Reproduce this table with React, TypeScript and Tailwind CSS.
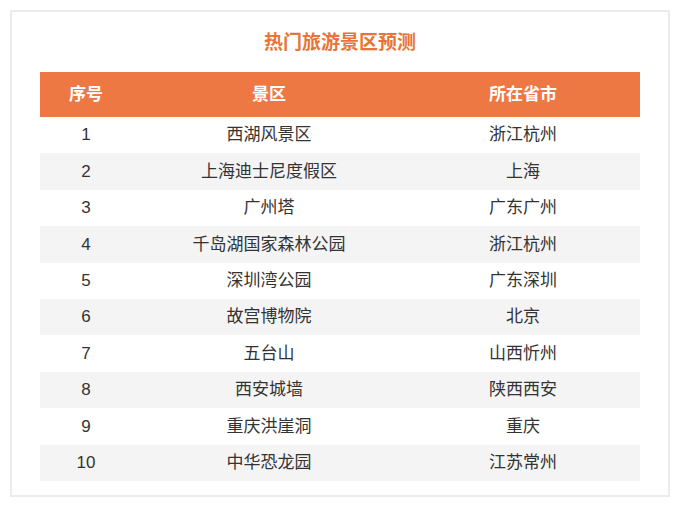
const rows = [
  { id: 1, name: "西湖风景区", city: "浙江杭州" },
  { id: 2, name: "上海迪士尼度假区", city: "上海" },
  { id: 3, name: "广州塔", city: "广东广州" },
  { id: 4, name: "千岛湖国家森林公园", city: "浙江杭州" },
  { id: 5, name: "深圳湾公园", city: "广东深圳" },
  { id: 6, name: "故宫博物院", city: "北京" },
  { id: 7, name: "五台山", city: "山西忻州" },
  { id: 8, name: "西安城墙", city: "陕西西安" },
  { id: 9, name: "重庆洪崖洞", city: "重庆" },
  { id: 10, name: "中华恐龙园", city: "江苏常州" },
];

export default function App() {
  return (
    <div
      className="w-[680px] h-[508px] bg-white pt-[10px] pl-[10px]"
      style={{ fontFamily: '"Liberation Sans", "Noto Sans CJK SC", sans-serif' }}
    >
      <div className="w-[660px] h-[487px] border-2 border-[#ececec] px-[28px] pt-[17px]">
        <h1 className="h-[28px] leading-[28px] text-center text-[19px] font-bold text-[#ea7337] mb-[15px]">
          热门旅游景区预测
        </h1>

        <div className="w-[600px]">
          <div className="grid grid-cols-[92px_274px_234px] h-[45px] items-center bg-[#ee7843] text-white text-[17px] font-bold">
            <div className="text-center">序号</div>
            <div className="text-center">景区</div>
            <div className="text-center">所在省市</div>
          </div>
          {rows.map((r, i) => (
            <div
              key={r.id}
              className={
                "grid grid-cols-[92px_274px_234px] h-[36.4px] items-center text-[17px] text-[#333333] " +
                (i % 2 === 1 ? "bg-[#f4f4f4]" : "bg-white")
              }
            >
              <div className="text-center">{r.id}</div>
              <div className="text-center">{r.name}</div>
              <div className="text-center">{r.city}</div>
            </div>
          ))}
        </div>
      </div>
    </div>
  );
}
